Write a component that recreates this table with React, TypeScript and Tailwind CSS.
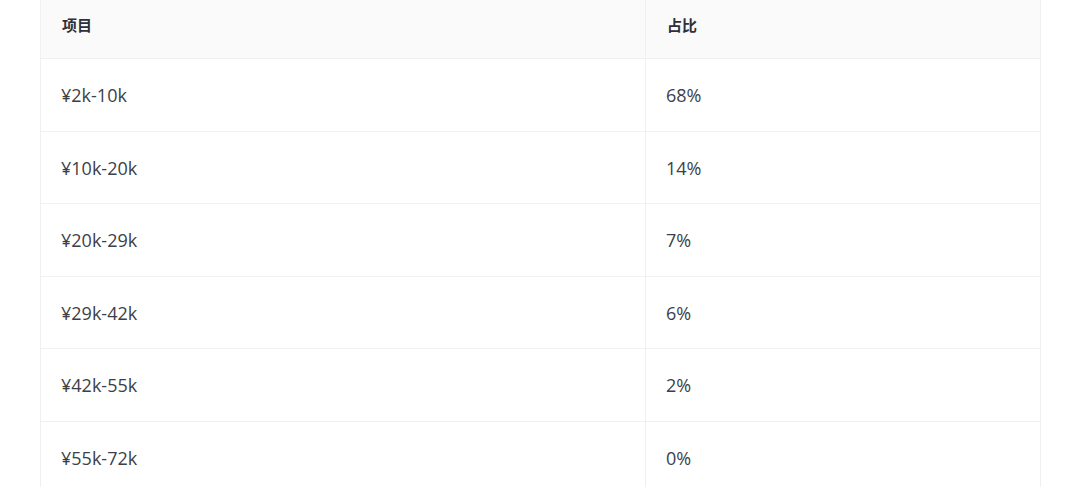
import React from "react";

const rows = [
  ["¥2k-10k", "68%"],
  ["¥10k-20k", "14%"],
  ["¥20k-29k", "7%"],
  ["¥29k-42k", "6%"],
  ["¥42k-55k", "2%"],
  ["¥55k-72k", "0%"],
];

export default function App() {
  return (
    <div className="w-[1080px] h-[487px] overflow-hidden bg-white" style={{ fontFamily: '"Open Sans", "Noto Sans CJK SC", sans-serif' }}>
      <div className="ml-[40px] w-[1001px] border-x border-[#f0f0f0]">
        <div className="grid grid-cols-[605px_1fr] h-[59px] bg-[#fafafa] border-b border-[#f0f0f0] text-[15px] font-bold text-[#2d2f3b]">
          <div className="pl-[21px] pt-[14px] border-r border-[#f0f0f0]">项目</div>
          <div className="pl-[21px] pt-[14px]">占比</div>
        </div>
        {rows.map(([a, b]) => (
          <div key={a} className="grid grid-cols-[605px_1fr] h-[72.5px] border-b border-[#f0f0f0] text-[18px] text-[#3c3f48]">
            <div className="pl-[20px] flex items-center pt-[2px] border-r border-[#f0f0f0]">{a}</div>
            <div className="pl-[20px] flex items-center pt-[2px]">{b}</div>
          </div>
        ))}
      </div>
    </div>
  );
}
